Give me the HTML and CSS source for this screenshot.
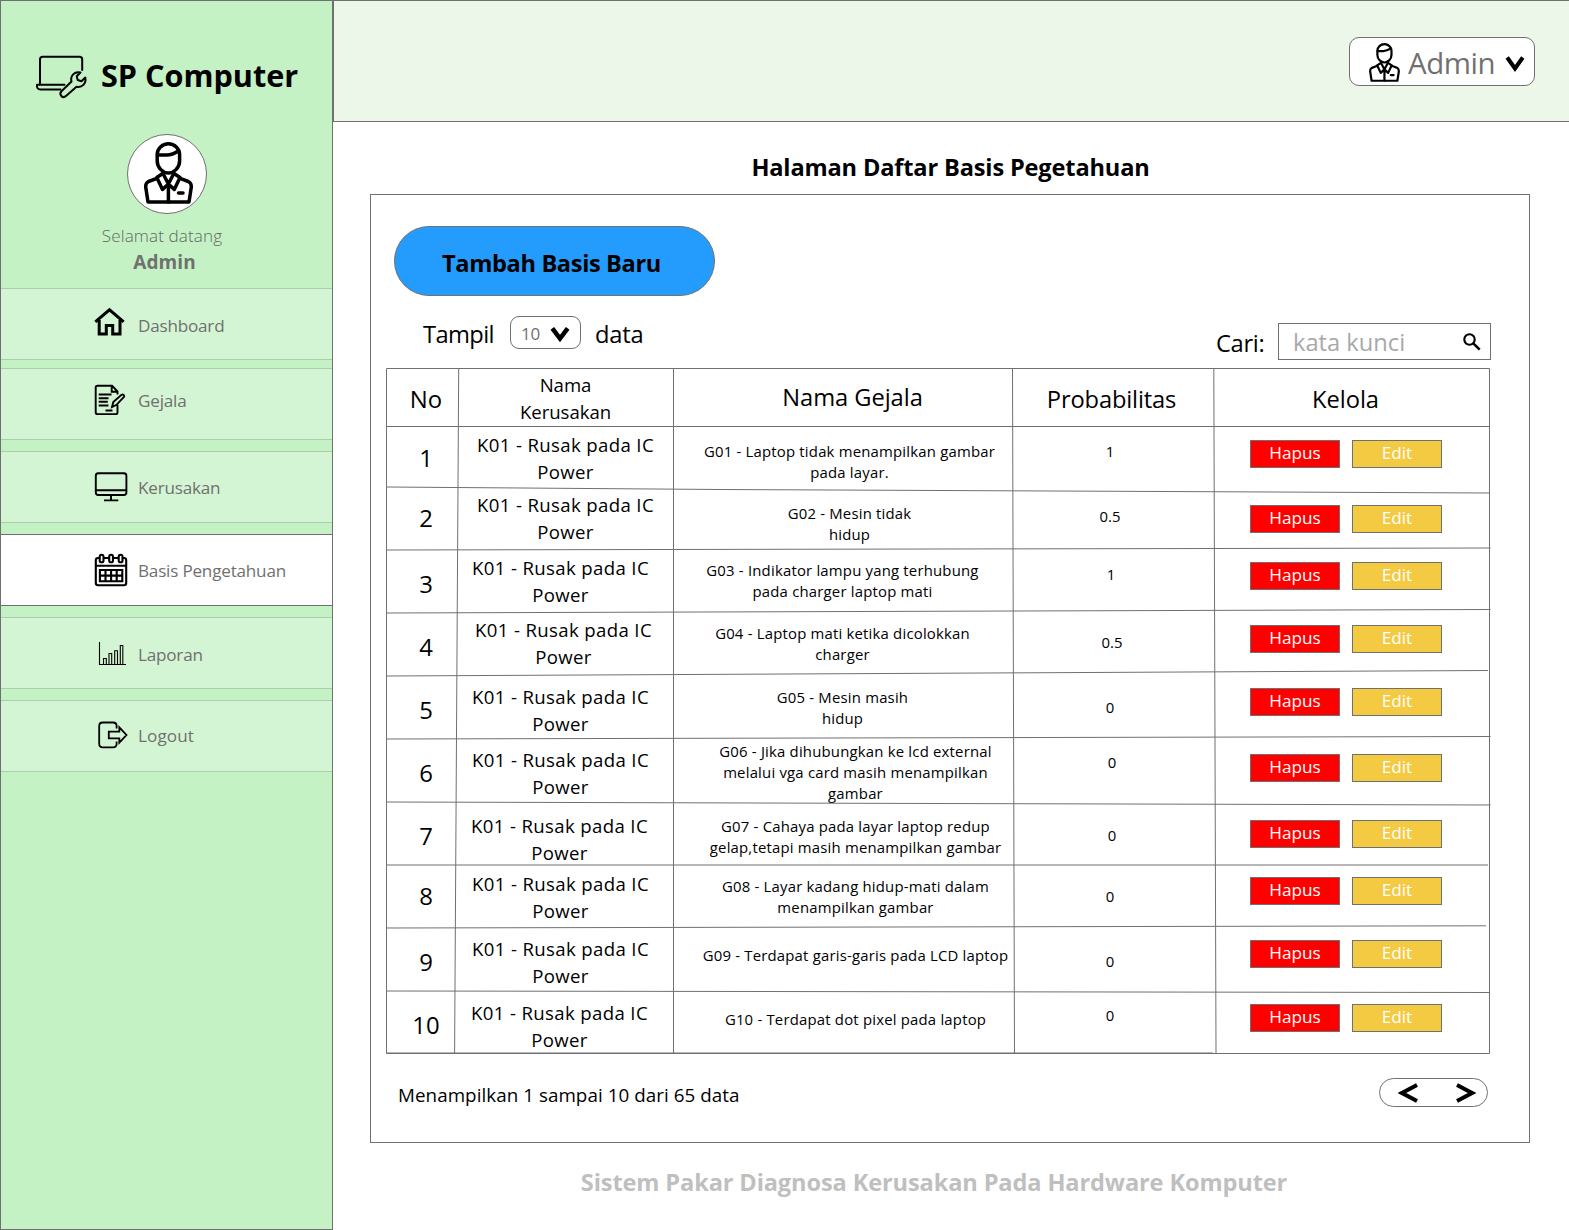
FILE: index.html
```html
<!DOCTYPE html>
<html lang="id">
<head>
<meta charset="utf-8">
<title>SP Computer - Basis Pengetahuan</title>
<link rel="stylesheet" href="styles.css">
</head>
<body>
<svg class="defs" width="0" height="0" aria-hidden="true">
  <symbol id="person" viewBox="0 0 49 62">
    <g fill="none" stroke="currentColor" stroke-width="3.5" stroke-linejoin="round" stroke-linecap="round">
      <path d="M13.2 12.5a11.2 10.7 0 0 1 22.4 0V19c0 7-6 12-11.2 12s-11.2-5-11.2-12z"/>
      <path d="M13.5 12.9h9q6 0 12-4.2"/>
      <path d="M13 36.3L4.500 39.500Q1.500 41 1.700 45L4 60H45L47.300 45Q47.500 41 44.300 39.500L36 36.300"/>
      <path d="M18.800 31.500L12.800 35.500L18.500 47.500L24.400 42L30.300 47.500L36 35.500L30 31.500M19.500 32.500L24.400 42L29.300 32.500M24.400 42V60"/>
      <path d="M34.500 51h4.500"/>
    </g>
  </symbol>
</svg>
<div class="app">
  <aside class="sidebar">
    <div class="brand">
      <svg class="brand-icon" width="54" height="48" viewBox="35 53 54 48">
        <path d="M40 83V59.500q0-2.700 2.700-2.700H79.500q2.700 0 2.700 2.700V70M64.500 84.800H37q-.500 4.600 3.500 4.600H60.500" />
        <path d="M61.500 91.300L71.500 81.500C70 76 74.500 71 80.500 72.500L76.700 76.300L77.700 80L81.500 81.300L85.300 77.500C86.500 83.500 82 88 76.500 86.700L66 96C62.500 99 58.500 94.500 61.500 91.300z"/>
      </svg>
      <h1 class="brand-name">SP Computer</h1>
    </div>
    <div class="avatar"><svg class="person" width="49" height="62"><use href="#person"/></svg></div>
    <p class="welcome">Selamat datang</p>
    <p class="user">Admin</p>
    <nav class="menu">
      <a class="item dashboard"><svg class="icon" width="36" height="40" viewBox="93 303 36 40" stroke-width="3"><path d="M95.300 321.800L109.500 309.800L123.700 321.800M99.200 320V333.900H106.300V325.500H112.700V333.900H120V320"/></svg><span>Dashboard</span></a>
      <a class="item gejala"><svg class="icon" width="36" height="40" viewBox="93 380 36 40" stroke-width="1.900"><path d="M117.500 394.500V391.500L112 385.700H97.600q-1.900 0-1.900 1.900V412.200q0 1.900 1.900 1.900H115.600q1.900 0 1.900-1.900V405M111.700 386v5.700h5.500M98.700 394.500H111.500M98.700 398.200H108.500M98.700 401.800H107.800M98.700 405.500H108.500M105.500 410.500H112.500M112 407l1.300-5L121.500 394.800q2.600-1 2.700 1.800L116.500 404.800z"/></svg><span>Gejala</span></a>
      <a class="item kerusakan"><svg class="icon" width="36" height="40" viewBox="93 467 36 40" stroke-width="1.900"><rect x="95.800" y="473.200" width="30.600" height="21.800" rx="2.500"/><path d="M96 490.300H126.500M111 495V500.300M104 500.400H118.300"/></svg><span>Kerusakan</span></a>
      <a class="item basis active"><svg class="icon" width="36" height="40" viewBox="93 550 36 40" stroke-width="2.100"><path d="M99.500 558H98q-2.200 0-2.200 2.200V583q0 2.200 2.200 2.200H124q2.200 0 2.200-2.200V560.200q0-2.200-2.200-2.200H122.700M103.700 558H109M113.200 558H118.500M96 565.800H126"/><rect x="99.700" y="554.800" width="3.800" height="7.500" rx="1.900"/><rect x="109.200" y="554.800" width="3.800" height="7.500" rx="1.900"/><rect x="118.700" y="554.800" width="3.800" height="7.500" rx="1.900"/><path d="M99.900 570H122.300V581.300H99.900zM99.900 575.600H122.300M105.500 570V581.300M111.100 570V581.300M116.700 570V581.300"/></svg><span>Basis Pengetahuan</span></a>
      <a class="item laporan"><svg class="icon" width="36" height="40" viewBox="93 634 36 40" stroke-width="1.100"><path d="M99.500 642V664.500H126M103.500 664V658.500H106.300V664M109 664V653.500H111.700V664M114.700 664V650.700H117.500V664M120.300 664V645.500H122.800V664"/></svg><span>Laporan</span></a>
      <a class="item logout"><svg class="icon" width="36" height="40" viewBox="93 715 36 40" stroke-width="1.800"><path d="M116.600 728.500V726q0-3.500-3.500-3.500H102.700q-3.500 0-3.500 3.500V743.800q0 3.500 3.500 3.500H113.100q3.500 0 3.500-3.500V741.500M108.800 731.700H119.300V727.300L126.500 735L119.300 742.700V738.300H108.800z"/></svg><span>Logout</span></a>
    </nav>
  </aside>

  <div class="page">
    <header class="topbar">
      <button class="account"><svg class="person" width="31" height="39" viewBox="0 0 49 62"><use href="#person" width="49" height="62"/></svg><span>Admin</span><svg class="chevron" width="20" height="18" viewBox="0 0 20 18"><path d="M2.200 1.500L10 12.500L17.800 1.500" stroke-width="4"/></svg></button>
    </header>
    <main class="content">
      <h2 class="title">Halaman Daftar Basis Pegetahuan</h2>
      <section class="panel">
        <button class="add">Tambah Basis Baru</button>
        <div class="controls">
          <span class="label show">Tampil</span>
          <span class="select"><span>10</span><svg class="chevron" width="20" height="16" viewBox="0 0 20 16"><path d="M2.300 1.300L10 11.500L17.700 1.300" stroke-width="4.500"/></svg></span>
          <span class="label unit">data</span>
          <span class="label find">Cari:</span>
          <span class="search"><span>kata kunci</span><svg width="18" height="18" viewBox="0 0 18 18"><circle cx="6.500" cy="6.500" r="5.200" fill="none" stroke="#000" stroke-width="2.100"/><path d="M10.300 10.300L16.700 16.700" stroke="#000" stroke-width="2.500"/></svg></span>
        </div>
        <div class="table">
          <svg class="lines" width="1106" height="687" viewBox="385 368 1106 687">
            <path d="M386.500 368.500H1489.500V1053.500H386.500zM386.500 426.500H1489.500M386.500 487L720 489.500L1489.500 493M386.500 550L1490.500 548M386.500 613L1490.500 609.500M386.500 676L1488 670.500M386.500 739L1490.500 736.500M386.500 802L1490.500 805M386.500 865H1488M386.500 928L1486 925.800M386.500 991L1489.500 992.500M386.500 1053H1213M458.700 368L454.600 1053M673.500 368V1053M1012.500 368L1014.500 1053M1213.800 368L1216 1053"/>
          </svg>
          <div class="row head">
            <div class="no">No</div><div class="k">Nama<br>Kerusakan</div><div class="gh">Nama Gejala</div><div class="ph">Probabilitas</div><div class="ah">Kelola</div>
          </div>
          <div class="row r1"><div class="no">1</div><div class="k">K01 - Rusak pada IC<br>Power</div><div class="g">G01 - Laptop tidak menampilkan gambar<br>pada layar.</div><div class="p">1</div><div class="act"><button class="del">Hapus</button><button class="edit">Edit</button></div></div>
          <div class="row r2"><div class="no">2</div><div class="k">K01 - Rusak pada IC<br>Power</div><div class="g">G02 - Mesin tidak<br>hidup</div><div class="p">0.5</div><div class="act"><button class="del">Hapus</button><button class="edit">Edit</button></div></div>
          <div class="row r3"><div class="no">3</div><div class="k">K01 - Rusak pada IC<br>Power</div><div class="g">G03 - Indikator lampu yang terhubung<br>pada charger laptop mati</div><div class="p">1</div><div class="act"><button class="del">Hapus</button><button class="edit">Edit</button></div></div>
          <div class="row r4"><div class="no">4</div><div class="k">K01 - Rusak pada IC<br>Power</div><div class="g">G04 - Laptop mati ketika dicolokkan<br>charger</div><div class="p">0.5</div><div class="act"><button class="del">Hapus</button><button class="edit">Edit</button></div></div>
          <div class="row r5"><div class="no">5</div><div class="k">K01 - Rusak pada IC<br>Power</div><div class="g">G05 - Mesin masih<br>hidup</div><div class="p">0</div><div class="act"><button class="del">Hapus</button><button class="edit">Edit</button></div></div>
          <div class="row r6"><div class="no">6</div><div class="k">K01 - Rusak pada IC<br>Power</div><div class="g">G06 - Jika dihubungkan ke lcd external<br>melalui vga card masih menampilkan<br>gambar</div><div class="p">0</div><div class="act"><button class="del">Hapus</button><button class="edit">Edit</button></div></div>
          <div class="row r7"><div class="no">7</div><div class="k">K01 - Rusak pada IC<br>Power</div><div class="g">G07 - Cahaya pada layar laptop redup<br>gelap,tetapi masih menampilkan gambar</div><div class="p">0</div><div class="act"><button class="del">Hapus</button><button class="edit">Edit</button></div></div>
          <div class="row r8"><div class="no">8</div><div class="k">K01 - Rusak pada IC<br>Power</div><div class="g">G08 - Layar kadang hidup-mati dalam<br>menampilkan gambar</div><div class="p">0</div><div class="act"><button class="del">Hapus</button><button class="edit">Edit</button></div></div>
          <div class="row r9"><div class="no">9</div><div class="k">K01 - Rusak pada IC<br>Power</div><div class="g">G09 - Terdapat garis-garis pada LCD laptop</div><div class="p">0</div><div class="act"><button class="del">Hapus</button><button class="edit">Edit</button></div></div>
          <div class="row r10"><div class="no">10</div><div class="k">K01 - Rusak pada IC<br>Power</div><div class="g">G10 - Terdapat dot pixel pada laptop</div><div class="p">0</div><div class="act"><button class="del">Hapus</button><button class="edit">Edit</button></div></div>
        </div>
        <div class="summary">
          <span>Menampilkan 1 sampai 10 dari 65 data</span>
          <div class="pager">
            <svg class="chevron" width="20" height="20" viewBox="0 0 20 20"><path d="M19 2L4 10L19 18" stroke-width="4"/></svg>
            <svg class="chevron" width="20" height="20" viewBox="0 0 20 20"><path d="M1 2L16 10L1 18" stroke-width="4"/></svg>
          </div>
        </div>
      </section>
      <footer class="footer">Sistem Pakar Diagnosa Kerusakan Pada Hardware Komputer</footer>
    </main>
  </div>
</div>
</body>
</html>
```
FILE: styles.css
```css
* { box-sizing: border-box; }
body { margin: 0; font-family: "Open Sans", "Noto Sans", sans-serif; color: #000; background: #fff; }
h1, h2, p { margin: 0; }
button { margin: 0; padding: 0; font: inherit; color: inherit; letter-spacing: inherit; }
.defs { display: none; }
.app { display: flex; width: 1569px; height: 1230px; overflow: hidden; white-space: nowrap; }

/* Sidebar */
.sidebar { width: 333px; height: 1230px; border: 1px solid #707070; background: #c5f2c5; }
.brand { display: flex; padding-left: 34px; padding-top: 52px; height: 133px; }
.brand-icon { fill: none; stroke: #000; stroke-width: 2; stroke-linejoin: round; stroke-linecap: round; }
.brand-name { margin-left: 12px; font-size: 30.6px; line-height: 44px; height: 44px; letter-spacing: 0; }
.avatar { display: flex; justify-content: center; width: 80px; height: 80px; margin-left: 126px; padding-top: 7px; padding-left: 2px; border: 1px solid #707070; border-radius: 50%; background: #fff; }
.person { color: #000; flex: none; }
.welcome { margin-top: 9px; width: 322px; text-align: center; font-size: 17.1px; font-weight: 350; line-height: 25px; letter-spacing: .1px; color: #626862; }
.user { width: 327px; text-align: center; font-size: 19px; font-weight: 700; line-height: 28px; letter-spacing: .1px; color: #707070; }
.menu { display: flex; flex-direction: column; gap: 11px; margin-top: 12px; }
.item { display: flex; height: 72px; padding-left: 92px; border: solid #a9ceab; border-width: 1px 0; background: #d4f5d4; font-size: 17.1px; line-height: 24px; letter-spacing: -.2px; color: #707070; }
.item.active { background: #fff; border-color: #707070; }
.item span { margin-left: 9px; margin-top: 24px; }
.icon { fill: none; stroke: #000; margin-top: 15px; }
.dashboard { margin-bottom: -3px; }
.dashboard .icon { margin-top: 14px; }
.dashboard span { margin-top: 25px; }
.gejala .icon { margin-top: 11px; }
.gejala span { margin-top: 20px; }
.laporan .icon { margin-top: 16px; }
.laporan span { margin-top: 25px; }
.logout .icon { margin-top: 14px; }
.logout span { margin-top: 23px; letter-spacing: .1px; }

/* Top bar */
.page { flex: 1; }
.topbar { display: flex; justify-content: flex-end; height: 122px; padding: 36px 34px 0 0; border: solid #707070; border-width: 1px 0 1px 1px; background: #ecf7ea; }
.account { display: flex; width: 186px; height: 49px; padding-left: 19px; padding-top: 5px; border: 1px solid #707070; border-radius: 10px; background: #fff; color: #707070; font-size: 29.4px; line-height: 40px; letter-spacing: -.4px; }
.account span { margin-left: 8px; width: 98px; text-align: left; }
.account .chevron { margin-top: 13px; margin-left: -1px; }
.chevron { fill: none; stroke: #000; flex: none; }

/* Content */
.content { padding-left: 37px; }
.title { margin-top: 28px; width: 1161px; text-align: center; font-size: 23.6px; line-height: 34px; letter-spacing: -.16px; }
.panel { margin-top: 10px; width: 1160px; height: 949px; border: 1px solid #707070; padding-top: 31px; }
.add { display: block; margin-left: 23px; width: 321px; height: 70px; padding-left: 47px; text-align: left; border: 1px solid #707070; border-radius: 35px; background: #249cfe; font-size: 23.6px; font-weight: 700; line-height: 34px; padding-top: 4px; letter-spacing: -.36px; }
.controls { display: flex; align-items: flex-start; height: 72px; font-size: 23.7px; line-height: 32px; letter-spacing: -.1px; }
.label { margin-top: 22px; }
.show { margin-left: 52px; width: 87px; letter-spacing: -.6px; }
.select { display: flex; margin-top: 20px; width: 71px; height: 33px; padding: 0 10px 0 10px; border: 1px solid #707070; border-radius: 9px; font-size: 17px; color: #707070; line-height: 34px; justify-content: space-between; }
.select .chevron { margin-top: 10px; }
.unit { margin-left: 14px; letter-spacing: -.2px; }
.find { margin-left: auto; margin-top: 31px; width: 62px; letter-spacing: -.3px; }
.search { display: flex; justify-content: space-between; margin-top: 27px; margin-right: 38px; width: 213px; height: 37px; padding: 0 9px 0 14px; border: 1px solid #707070; line-height: 36px; color: #a8a8a8; letter-spacing: 0; }
.search svg { margin-top: 9px; }

/* Knowledge base table */
.table { position: relative; margin-left: 15px; width: 1104px; height: 686px; }
.lines { position: absolute; left: -1px; top: 0; fill: none; stroke: #707070; stroke-width: 1; }
.row { display: grid; grid-template-columns: 72px 215px 339px 202px 276px; height: var(--h); text-align: center; --kx: 0px; --gx: 0px; --px: 0px; }
.row > div { height: 0; }
.no { margin-top: var(--n); margin-left: 8px; font-size: 23.9px; line-height: 32px; }
.k { margin-top: var(--k); margin-left: calc(2 * var(--kx)); font-size: 18.6px; line-height: 27px; letter-spacing: .36px; }
.g { margin-top: var(--g); margin-left: calc(2 * var(--gx)); font-size: 14.9px; line-height: 21px; letter-spacing: .2px; }
.p { margin-top: var(--p); margin-left: calc(-6px + 2 * var(--px)); font-size: 14.9px; line-height: 21px; }
.act { display: flex; gap: 12px; margin-top: var(--b); margin-left: 36px; }
.act button { flex: none; width: 90px; height: 28px; border: 1px solid #707070; color: #fff; font-size: 17.2px; line-height: 24px; padding-bottom: 3px; letter-spacing: 0; }
.act .del { background: #f00; }
.act .edit { background: #f4ca43; }
.head { --h: 59px; --n: 15px; --k: 3px; font-size: 23.7px; line-height: 32px; letter-spacing: -.05px; }
.head .k { letter-spacing: -.05px; }
.gh { margin-top: 13px; margin-left: 20px; }
.ph { margin-top: 15px; margin-left: -3px; letter-spacing: -.15px; }
.ah { margin-top: 15px; margin-left: -13px; }
.r1 { --h: 62px; --n: 15px; --k: 4px; --g: 14px; --p: 14px; --b: 13px; --gx: 7px; }
.r2 { --h: 60px; --n: 13px; --k: 2px; --g: 14px; --p: 17px; --b: 16px; --gx: 7px; }
.r3 { --h: 62px; --n: 19px; --k: 5px; --g: 11px; --p: 15px; --b: 13px; --kx: -5px; --px: 1px; }
.r4 { --h: 63px; --n: 20px; --k: 5px; --g: 12px; --p: 21px; --b: 14px; --kx: -2px; --px: 2px; }
.r5 { --h: 63px; --n: 20px; --k: 9px; --g: 13px; --p: 23px; --b: 14px; --kx: -5px; }
.r6 { --h: 66px; --n: 20px; --k: 9px; --g: 4px; --p: 15px; --b: 17px; --kx: -5px; --gx: 13px; --px: 2px; }
.r7 { --h: 61px; --n: 17px; --k: 9px; --g: 13px; --p: 22px; --b: 17px; --kx: -6px; --gx: 13px; --px: 2px; }
.r8 { --h: 63px; --n: 16px; --k: 6px; --g: 12px; --p: 22px; --b: 13px; --kx: -5px; --gx: 13px; }
.r9 { --h: 64px; --n: 19px; --k: 8px; --g: 18px; --p: 24px; --b: 13px; --kx: -5px; --gx: 13px; }
.r10 { --h: 63px; --n: 18px; --k: 8px; --g: 18px; --p: 14px; --b: 13px; --kx: -6px; --gx: 13px; }

.summary { display: flex; justify-content: space-between; padding: 24px 41px 0 27px; font-size: 18.8px; letter-spacing: .06px; line-height: 35px; }
.pager { display: flex; justify-content: space-between; align-items: center; width: 109px; height: 29px; padding: 0 11px 0 18px; border: 1px solid #707070; border-radius: 15px; }
.footer { margin-top: 22px; width: 1128px; text-align: center; font-size: 23.6px; font-weight: 700; line-height: 34px; letter-spacing: -.13px; color: #bfbfbf; }
```
